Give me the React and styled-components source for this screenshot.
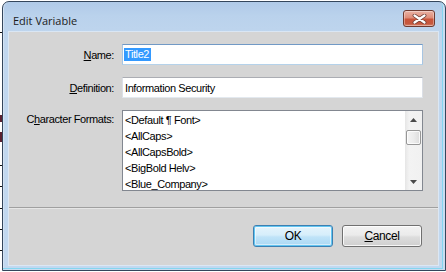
import React from 'react'
import styled, { createGlobalStyle } from 'styled-components'

const GlobalStyle = createGlobalStyle`
  html, body {
    margin: 0;
    padding: 0;
    background: #fff;
  }
  body {
    font-family: "Liberation Sans", Arial, sans-serif;
    font-size: 11px;
    letter-spacing: -0.4px;
    color: #000;
  }
`;

const Screen = styled.div`
  display: flex;
  align-items: flex-start;
  width: 446px;
  height: 272px;
  overflow: hidden;
`;

// bits of the window behind, peeking out on the left
const Backdrop = styled.div`
  width: 2px;
  height: 272px;
  flex: none;
  background:
    linear-gradient(#111, #111) 0 32px / 2px 1px no-repeat,
    linear-gradient(#5b2232, #5b2232) 0 115px / 2px 7px no-repeat,
    linear-gradient(#5b2232, #5b2232) 0 132px / 2px 10px no-repeat,
    linear-gradient(#111, #111) 0 165px / 2px 1px no-repeat,
    linear-gradient(#111, #111) 0 186px / 2px 1px no-repeat,
    linear-gradient(#111, #111) 0 208px / 2px 1px no-repeat,
    linear-gradient(#111, #111) 0 229px / 2px 1px no-repeat,
    linear-gradient(#111, #111) 0 250px / 2px 1px no-repeat,
    #fff;
`;

const Window = styled.div`
  margin-top: 1px;
  width: 444px;
  height: 270px;
  box-sizing: border-box;
  border: 1px solid #34465c;
  border-radius: 7px 7px 0 0;
  background: linear-gradient(180deg, #b0cae8 0px, #bad2ec 14px, #c0d6ee 40px, #c2d8ef 100%);
  box-shadow: inset -2px -1px 0 #c9dcf0, inset -3px -2px 0 #86d6f0, inset 1px 0 0 #d4e3f3;
  display: flex;
  flex-direction: column;
`;

const TitleBar = styled.div`
  height: 30px;
  flex: none;
  display: flex;
  align-items: flex-start;
  justify-content: space-between;
  padding: 0 10px;
`;

const Title = styled.span`
  margin-top: 11px;
  font-family: "Open Sans", "Noto Sans", sans-serif;
  font-size: 11px;
  letter-spacing: 0;
  line-height: 15px;
  color: #1b1b1b;
`;

const CloseButton = styled.div`
  margin-top: 8px;
  width: 32px;
  height: 17px;
  box-sizing: border-box;
  border: 1px solid #6e3a30;
  border-radius: 3px;
  background: linear-gradient(180deg, #eab2a4 0%, #de8c78 45%, #c9543a 55%, #c6593f 85%, #d98a73 100%);
  box-shadow: inset 0 0 0 1px rgba(255, 255, 255, 0.35);
  display: flex;
  align-items: center;
  justify-content: center;
`;

const Frame = styled.div`
  flex: 1;
  display: flex;
  padding: 0 7px 5px 6px;
`;

const Client = styled.div`
  flex: 1;
  background: #d5d5d5;
  box-shadow: 0 0 0 1px rgba(230, 238, 247, 0.7);
  display: flex;
  flex-direction: column;
`;

const Form = styled.div`
  display: grid;
  grid-template-columns: 105px 301px;
  column-gap: 8px;
  row-gap: 12px;
  padding-top: 12px;
`;

const Label = styled.label`
  text-align: right;
  line-height: 16px;
  white-space: nowrap;
  align-self: ${(p) => (p.$top ? 'start' : 'center')};
  margin-top: ${(p) => (p.$top ? '1px' : '0')};
`;

const Field = styled.div`
  height: 21px;
  box-sizing: border-box;
  background: #fff;
  border: 1px solid;
  border-color: ${(p) => (p.$focused ? '#7199c5 #a8c5e2 #b5d2ea' : '#abadb3 #dbdfe6 #e3e9ef')};
  padding-left: 2px;
  display: flex;
  align-items: center;
  white-space: nowrap;
`;

const Selection = styled.span`
  margin-left: -1px;
  padding: 0 2px 0 1px;
  line-height: 13px;
  background: #3399ff;
  color: #fff;
`;

const ListBox = styled.div`
  height: 81px;
  box-sizing: border-box;
  border: 1px solid #828790;
  background: #fff;
  display: flex;
`;

const Items = styled.div`
  flex: 1;
  overflow: hidden;
  padding-top: 1px;
`;

const Item = styled.div`
  height: 16px;
  line-height: 16px;
  padding-left: 2px;
  white-space: nowrap;
`;

const ScrollBar = styled.div`
  width: 17px;
  flex: none;
  display: flex;
  flex-direction: column;
  background: linear-gradient(90deg, #e6e6e6 0%, #f3f3f3 25%, #f1f1f1 100%);
`;

const ScrollButton = styled.div`
  height: 17px;
  flex: none;
  display: flex;
  align-items: center;
  justify-content: center;
`;

const Track = styled.div`
  flex: 1;
  padding: 2px 1px 0 1px;
`;

const Thumb = styled.div`
  height: 15px;
  box-sizing: border-box;
  border: 1px solid #979797;
  border-radius: 2px;
  background: linear-gradient(90deg, #f4f4f4 0%, #ececec 50%, #dcdcdc 100%);
  box-shadow: inset 0 0 0 1px rgba(255, 255, 255, 0.8);
`;

const Separator = styled.div`
  margin-top: 16px;
  height: 1px;
  background: #a0a0a0;
  border-bottom: 1px solid #e6e6e6;
`;

const ButtonRow = styled.div`
  margin-top: 16px;
  padding-right: 16px;
  display: flex;
  justify-content: flex-end;
  gap: 9px;
`;

const Button = styled.div`
  width: 80px;
  height: 22px;
  box-sizing: border-box;
  border: 1px solid ${(p) => (p.$default ? '#3c7fb1' : '#707070')};
  border-radius: 3px;
  background: ${(p) =>
    p.$default
      ? 'linear-gradient(180deg, #e5f4fc 0%, #d6eefb 45%, #bfe3f8 55%, #aad8f3 100%)'
      : 'linear-gradient(180deg, #f2f2f2 0%, #ebebeb 45%, #dddddd 55%, #cfcfcf 100%)'};
  box-shadow: ${(p) =>
    p.$default
      ? 'inset 0 0 0 1px #62c6f2, inset 0 0 0 2px rgba(255,255,255,0.5)'
      : 'inset 0 0 0 1px rgba(255,255,255,0.8)'};
  display: flex;
  align-items: center;
  justify-content: center;
  font-size: 12px;
`;

const Arrow = ({ up }) => (
  <svg width="7" height="4" viewBox="0 0 7 4">
    <polygon points={up ? '0,4 3.5,0 7,4' : '0,0 7,0 3.5,4'} fill="#4a4a4a" />
  </svg>
);

const CloseGlyph = () => (
  <svg width="15" height="10" viewBox="0 0 15 10">
    <path d="M2.5 1.5 L12.5 8.5 M12.5 1.5 L2.5 8.5" stroke="#6a3a32" strokeWidth="3.8" strokeLinecap="round" />
    <path d="M2.5 1.5 L12.5 8.5 M12.5 1.5 L2.5 8.5" stroke="#fff" strokeWidth="2.2" strokeLinecap="round" />
  </svg>
);

const formats = ['<Default \u00b6 Font>', '<AllCaps>', '<AllCapsBold>', '<BigBold Helv>', '<Blue_Company>'];

export default function App() {
  return (
    <>
      <GlobalStyle />
      <Screen>
        <Backdrop />
        <Window>
          <TitleBar>
            <Title>Edit Variable</Title>
            <CloseButton>
              <CloseGlyph />
            </CloseButton>
          </TitleBar>
          <Frame>
            <Client>
              <Form>
                <Label><u>N</u>ame:</Label>
                <Field $focused>
                  <Selection>Title2</Selection>
                </Field>
                <Label><u>D</u>efinition:</Label>
                <Field>Information Security</Field>
                <Label $top>C<u>h</u>aracter Formats:</Label>
                <ListBox>
                  <Items>
                    {formats.map((f) => (
                      <Item key={f}>{f}</Item>
                    ))}
                  </Items>
                  <ScrollBar>
                    <ScrollButton><Arrow up /></ScrollButton>
                    <Track>
                      <Thumb />
                    </Track>
                    <ScrollButton><Arrow /></ScrollButton>
                  </ScrollBar>
                </ListBox>
              </Form>
              <Separator />
              <ButtonRow>
                <Button $default>OK</Button>
                <Button><span><u>C</u>ancel</span></Button>
              </ButtonRow>
            </Client>
          </Frame>
        </Window>
      </Screen>
    </>
  )
}
